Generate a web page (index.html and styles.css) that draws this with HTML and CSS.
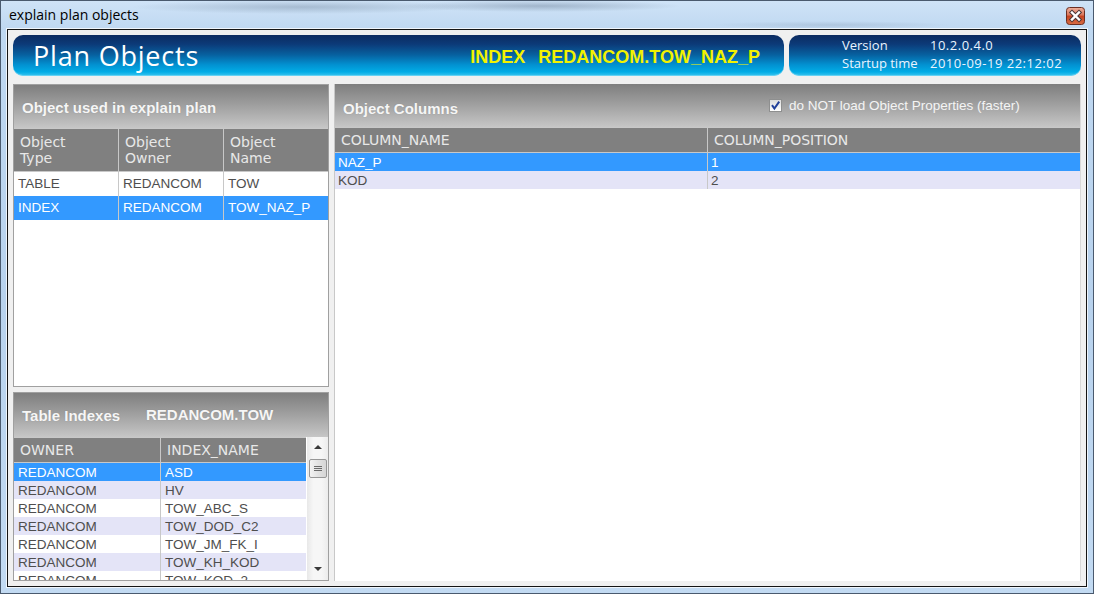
FILE: index.html
```html
<!DOCTYPE html>
<html>
<head>
<meta charset="utf-8">
<title>explain plan objects</title>
<link rel="stylesheet" href="styles.css">
</head>
<body>
<div class="window">
  <div class="titlebar">
    <span class="wtitle">explain plan objects</span>
    <div class="close">
      <svg width="19" height="18" viewBox="0 0 19 18">
        <defs>
          <linearGradient id="cg" x1="0" y1="0" x2="0" y2="1">
            <stop offset="0" stop-color="#eeb09c"/>
            <stop offset="0.45" stop-color="#d9755a"/>
            <stop offset="0.5" stop-color="#c6421f"/>
            <stop offset="1" stop-color="#d86d45"/>
          </linearGradient>
        </defs>
        <rect x="0.5" y="0.5" width="18" height="17" rx="3" fill="url(#cg)" stroke="#6b2e22"/>
        <path d="M6 5.5 L13 12.5 M13 5.5 L6 12.5" stroke="#4a3636" stroke-width="4.4" stroke-linecap="square"/>
        <path d="M6 5.5 L13 12.5 M13 5.5 L6 12.5" stroke="#ffffff" stroke-width="2.4" stroke-linecap="square"/>
      </svg>
    </div>
  </div>
  <div class="client">
    <div class="banners">
      <div class="banner main">
        <h1 class="btitle">Plan Objects</h1>
        <div class="bobj"><span>INDEX</span><span>REDANCOM.TOW_NAZ_P</span></div>
      </div>
      <div class="banner info">
        <div class="infogrid">
          <span>Version</span><span class="val">10.2.0.4.0</span>
          <span>Startup time</span><span class="val">2010-09-19 22:12:02</span>
        </div>
      </div>
    </div>
    <div class="panels">
      <div class="leftcol">
        <section class="panel objects">
          <div class="phead ph-obj"><span>Object used in explain plan</span></div>
          <div class="grid g3">
            <div class="ghead">
              <div class="c">Object<br>Type</div>
              <div class="c">Object<br>Owner</div>
              <div class="c">Object<br>Name</div>
            </div>
            <div class="grow">
              <div class="c">TABLE</div>
              <div class="c">REDANCOM</div>
              <div class="c">TOW</div>
            </div>
            <div class="grow sel">
              <div class="c">INDEX</div>
              <div class="c">REDANCOM</div>
              <div class="c">TOW_NAZ_P</div>
            </div>
          </div>
        </section>
        <section class="panel indexes">
          <div class="phead ph-idx"><span class="pt-idx">Table Indexes</span><span class="sub">REDANCOM.TOW</span></div>
          <div class="gridwrap">
            <div class="grid gc gi">
              <div class="ghead">
                <div class="c">OWNER</div>
                <div class="c">INDEX_NAME</div>
              </div>
              <div class="grow sel"><div class="c">REDANCOM</div><div class="c">ASD</div></div>
              <div class="grow alt"><div class="c">REDANCOM</div><div class="c">HV</div></div>
              <div class="grow"><div class="c">REDANCOM</div><div class="c">TOW_ABC_S</div></div>
              <div class="grow alt"><div class="c">REDANCOM</div><div class="c">TOW_DOD_C2</div></div>
              <div class="grow"><div class="c">REDANCOM</div><div class="c">TOW_JM_FK_I</div></div>
              <div class="grow alt"><div class="c">REDANCOM</div><div class="c">TOW_KH_KOD</div></div>
              <div class="grow"><div class="c">REDANCOM</div><div class="c">TOW_KOD_2</div></div>
            </div>
            <div class="vscroll">
              <div class="arrow up"></div>
              <div class="thumb"><div class="grip"></div></div>
              <div class="arrow down"></div>
            </div>
          </div>
        </section>
      </div>
      <section class="panel columns">
        <div class="phead ph-col">
          <span class="pt-col">Object Columns</span>
          <label class="chk">
            <span class="box">
              <svg width="13" height="13" viewBox="0 0 13 13">
                <path d="M3 6.2 L5.4 9.6 L10.2 2.6" fill="none" stroke="#22409a" stroke-width="2"/>
              </svg>
            </span>
            <span class="chktext">do NOT load Object Properties (faster)</span>
          </label>
        </div>
        <div class="grid gc gcol">
          <div class="ghead">
            <div class="c">COLUMN_NAME</div>
            <div class="c">COLUMN_POSITION</div>
          </div>
          <div class="grow sel"><div class="c">NAZ_P</div><div class="c">1</div></div>
          <div class="grow alt"><div class="c">KOD</div><div class="c">2</div></div>
        </div>
      </section>
    </div>
  </div>
</div>
</body>
</html>
```
FILE: styles.css
```css
html, body {
  margin: 0;
  padding: 0;
}
body {
  width: 1094px;
  height: 594px;
  overflow: hidden;
  background: #bcd6f0;
}
.window {
  box-sizing: border-box;
  width: 1094px;
  height: 594px;
  border: 1px solid #4a5a6e;
  padding: 0 6px 6px 6px;
  display: flex;
  flex-direction: column;
  background:
    radial-gradient(ellipse 170px 7px at 300px 6px, rgba(70, 90, 115, 0.28), rgba(70, 90, 115, 0) 100%),
    radial-gradient(ellipse 140px 6px at 540px 5px, rgba(60, 80, 105, 0.30), rgba(60, 80, 105, 0) 100%),
    radial-gradient(ellipse 120px 4px at 830px 24px, rgba(90, 110, 135, 0.18), rgba(90, 110, 135, 0) 100%),
    linear-gradient(to bottom, #cfe3f7 0px, #bfd8f1 28px, #b8d2ed 300px, #c2daf2 594px);
}
.titlebar {
  height: 28px;
  display: flex;
  align-items: flex-start;
  flex: none;
}
.wtitle {
  font-family: "Open Sans", "Noto Sans", sans-serif;
  font-size: 14px;
  color: #000;
  padding: 4px 0 0 2px;
  white-space: nowrap;
}
.close {
  margin: 6px 2px 0 auto;
  width: 19px;
  height: 18px;
}
.close svg {
  display: block;
}
.client {
  flex: 1;
  box-sizing: border-box;
  border: 1px solid #141414;
  box-shadow: 0 0 0 1px rgba(255, 255, 255, 0.75);
  background: #f0f0f0;
  padding: 5px;
  display: flex;
  flex-direction: column;
  gap: 8px;
  min-height: 0;
}
.banners {
  display: flex;
  gap: 5px;
  height: 41px;
  flex: none;
}
.banner {
  box-sizing: border-box;
  border-radius: 10px;
  background: linear-gradient(to bottom, #0b2b60 0%, #0c3a78 22%, #07609f 48%, #0290d0 72%, #01ace6 90%, #3cc5ef 100%);
  box-shadow: inset 0 -1px 0 rgba(150, 225, 250, 0.5);
}
.banner.main {
  width: 771px;
  display: flex;
  align-items: center;
  padding: 0 24px 0 20px;
}
.btitle {
  margin: 0;
  font-family: "Open Sans", "Noto Sans", sans-serif;
  font-weight: 400;
  font-size: 27px;
  letter-spacing: 0.8px;
  color: #ffffff;
  white-space: nowrap;
}
.bobj {
  margin-left: auto;
  padding-top: 3px;
  display: flex;
  gap: 13px;
  font-family: "Liberation Sans", Arial, sans-serif;
  font-weight: bold;
  font-size: 18px;
  color: #f2f200;
  white-space: nowrap;
}
.banner.info {
  flex: 1;
  padding: 1px 0 0 53px;
}
.infogrid {
  display: grid;
  grid-template-columns: 88px auto;
  font-family: "Open Sans", "Noto Sans", sans-serif;
  font-size: 13px;
  line-height: 18px;
  color: #eaf4ff;
  white-space: nowrap;
}
.infogrid .val {
  letter-spacing: 0.5px;
}
.panels {
  flex: 1;
  display: flex;
  gap: 5px;
  min-height: 0;
}
.leftcol {
  width: 316px;
  flex: none;
  display: flex;
  flex-direction: column;
  gap: 5px;
}
.panel {
  box-sizing: border-box;
  background: #ffffff;
  overflow: hidden;
}
.panel.objects {
  height: 303px;
  flex: none;
  border: 1px solid #a0a0a0;
}
.panel.indexes {
  flex: 1;
  border: 1px solid #a0a0a0;
  display: flex;
  flex-direction: column;
}
.panel.columns {
  flex: 1;
  border-left: 1px solid #c8c8c8;
  border-right: 1px solid #d8d8d8;
}
.phead {
  box-sizing: border-box;
  display: flex;
  align-items: center;
  padding-left: 8px;
  background: linear-gradient(to bottom, #7e7e7e 0%, #9a9a9a 40%, #c6c6c6 100%);
  font-family: "Liberation Sans", Arial, sans-serif;
  font-weight: bold;
  font-size: 15px;
  color: #f6f6f6;
  text-shadow: 0 0 1px rgba(90, 90, 90, 0.35);
  white-space: nowrap;
  flex: none;
}
.ph-obj {
  height: 43px;
  padding-top: 2px;
}
.ph-idx {
  height: 44px;
}
.pt-idx {
  width: 124px;
  flex: none;
}
.sub {
  padding-bottom: 2px;
}
.ph-col {
  height: 43px;
  padding-top: 5px;
}
.pt-col {
  width: 426px;
  flex: none;
}
.chk {
  display: flex;
  align-items: center;
  gap: 7px;
  margin-bottom: 5px;
  font-weight: normal;
  font-size: 13.5px;
  color: #f4f4f4;
  text-shadow: none;
}
.box {
  box-sizing: border-box;
  width: 13px;
  height: 13px;
  border: 1px solid #8e8f8f;
  background: linear-gradient(to bottom, #dcdcdc, #ffffff);
  display: block;
  position: relative;
}
.box svg {
  display: block;
  margin: -1px 0 0 -1px;
}
.grid {
  font-family: "Liberation Sans", Arial, sans-serif;
}
.ghead, .grow {
  display: grid;
}
.g3 .ghead, .g3 .grow {
  grid-template-columns: 105px 105px 104px;
}
.gi .ghead, .gi .grow {
  grid-template-columns: 147px 145px;
}
.gcol .ghead, .gcol .grow {
  grid-template-columns: 373px 372px;
}
.c {
  box-sizing: border-box;
  border-right: 1px solid #c8c8c8;
  overflow: hidden;
  white-space: nowrap;
}
.c:last-child {
  border-right: none;
}
.ghead {
  background: #808080;
  color: #e8e8e8;
  font-family: "DejaVu Sans", Verdana, sans-serif;
  font-size: 14px;
  border-top: 1px solid #c8c8c8;
  border-bottom: 1px solid #c8c8c8;
}
.ghead .c {
  padding-left: 6px;
}
.g3 .ghead .c {
  height: 42px;
  padding-top: 5px;
  line-height: 16px;
}
.gc .ghead .c {
  height: 24px;
  line-height: 24px;
}
.grow {
  color: #4e4e4e;
  font-size: 13.5px;
}
.grow .c {
  padding-left: 4px;
}
.g3 .grow .c {
  height: 24px;
  line-height: 24px;
}
.gc .grow .c {
  height: 18px;
  padding-top: 2px;
  line-height: 16px;
}
.gcol .grow .c {
  padding-left: 3px;
}
.grow.alt {
  background: #e4e4f7;
}
.grow.sel {
  background: #3399ff;
  color: #ffffff;
}
.gridwrap {
  flex: 1;
  display: flex;
  min-height: 0;
  overflow: hidden;
}
.gi {
  width: 292px;
  flex: none;
  overflow: hidden;
}
.vscroll {
  flex: 1;
  background: linear-gradient(to right, #e8e8e8, #f6f6f6 30%, #f6f6f6 70%, #ececec);
  border-left: 1px solid #ffffff;
  display: flex;
  flex-direction: column;
  align-items: center;
}
.arrow {
  width: 0;
  height: 0;
  border-left: 4px solid transparent;
  border-right: 4px solid transparent;
}
.arrow.up {
  margin-top: 8px;
  border-bottom: 4px solid #3a3a3a;
}
.arrow.down {
  margin-top: auto;
  margin-bottom: 9px;
  border-top: 4px solid #3a3a3a;
}
.thumb {
  box-sizing: border-box;
  margin-top: 10px;
  width: 18px;
  height: 19px;
  border: 1px solid #979797;
  border-radius: 2px;
  background: linear-gradient(to right, #f2f2f2, #e2e2e2 50%, #d6d6d6);
  display: flex;
  align-items: center;
  justify-content: center;
}
.grip {
  width: 8px;
  height: 5px;
  background: linear-gradient(to bottom, #6a6a6a 0, #6a6a6a 1px, transparent 1px, transparent 2px, #6a6a6a 2px, #6a6a6a 3px, transparent 3px, transparent 4px, #6a6a6a 4px, #6a6a6a 5px);
}
```
